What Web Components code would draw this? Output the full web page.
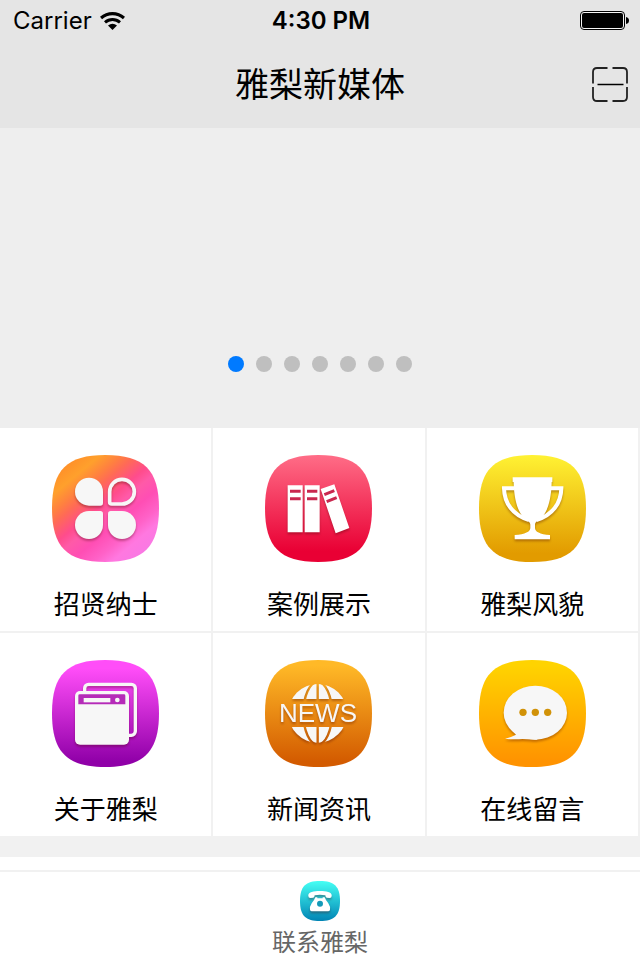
<!DOCTYPE html>
<html lang="zh-CN">
<head>
<meta charset="utf-8">
<meta name="viewport" content="width=device-width, initial-scale=1">
<title>雅梨新媒体</title>
<style>
  body {
    margin: 0;
    background: #fff;
    color: #000;
    font-family: Inter, "Noto Sans CJK SC", sans-serif;
  }
</style>
</head>
<body>
<media-app></media-app>

<script>
(() => {
  const SQUIRCLE = 'M160 0C276 0 321 45 321 160S276 321 160 321 0 276 0 160 45 0 160 0Z';

  class StatusBar extends HTMLElement {
    constructor() {
      super();
      this.attachShadow({ mode: 'open' });
      this.shadowRoot.innerHTML = `
        <style>
          :host{
            display:grid; grid-template-columns:1fr auto 1fr; align-items:center;
            height:42px; padding:0 11px 0 13px;
            font-size:24px; line-height:40px;
          }
          .carrier{ display:flex; align-items:center; gap:8px; }
          .time{ font-weight:600; }
          .battery{ justify-self:end; }
          svg{ display:block; }
        </style>
        <div class="carrier">
          <span>${this.getAttribute('carrier')}</span>
          <svg width="25" height="18" viewBox="0 0 25 18" fill="none" stroke="#000" aria-hidden="true">
            <path d="M1 6Q6 1.600 12.500 1.600T24 6" stroke-width="3.200"/>
            <path d="M5 10.300Q8.300 7.400 12.500 7.400T20 10.300" stroke-width="3"/>
            <path d="M8 13.600Q12.500 10 17 13.600L12.500 18Z" fill="#000" stroke="none"/>
          </svg>
        </div>
        <span class="time">${this.getAttribute('time')}</span>
        <svg class="battery" width="49" height="20" viewBox="0 0 49 20" aria-hidden="true">
          <rect x=".5" y=".5" width="44" height="18" rx="3.5" fill="#fff" fill-opacity=".6" stroke="#000"/>
          <rect x="2" y="2" width="41" height="15" rx="2" fill="#000"/>
          <path d="M46 6q3 .5 3 3.500t-3 3.500z"/>
        </svg>
      `;
    }
  }

  class NavBar extends HTMLElement {
    constructor() {
      super();
      this.attachShadow({ mode: 'open' });
      this.shadowRoot.innerHTML = `
        <style>
          :host{
            display:grid; grid-template-columns:1fr auto 1fr; align-items:center;
            height:86px; padding:0 12px;
          }
          h1{
            grid-column:2; margin:0;
            font-size:34px; font-weight:400; line-height:48px;
          }
          .action{ justify-self:end; display:flex; }
        </style>
        <h1><slot></slot></h1>
        <div class="action"><slot name="action"></slot></div>
      `;
    }
  }

  class BannerSlider extends HTMLElement {
    constructor() {
      super();
      this.attachShadow({ mode: 'open' });
      this.shadowRoot.innerHTML = `
        <style>
          :host{
            display:flex; align-items:flex-end; justify-content:center;
            box-sizing:border-box; height:300px; padding-bottom:56px;
            background:#eee;
          }
          .dots{ display:flex; gap:12px; }
          button{
            width:16px; height:16px; padding:0; border:0; border-radius:50%;
            background:#bfbfbf; cursor:pointer;
          }
          button[aria-current]{ background:#007aff; }
        </style>
        <div class="dots"></div>
      `;
      const dots = this.shadowRoot.querySelector('.dots');
      for (let i = 0; i < Number(this.getAttribute('count')); i++) {
        const b = document.createElement('button');
        b.type = 'button';
        b.setAttribute('aria-label', String(i + 1));
        b.addEventListener('click', () => this._show(i));
        dots.appendChild(b);
      }
      this._show(0);
    }

    _show(index) {
      this.shadowRoot.querySelectorAll('button').forEach((b, i) => {
        if (i === index) b.setAttribute('aria-current', 'true');
        else b.removeAttribute('aria-current');
      });
    }
  }

  // rounded tile with a gradient; the glyph is slotted on top
  class SquircleIcon extends HTMLElement {
    constructor() {
      super();
      this.attachShadow({ mode: 'open' });
      const stops = this.getAttribute('stops').split(',').map(s => {
        const [color, offset] = s.trim().split(' ');
        return `<stop offset="${offset}" stop-color="${color}"/>`;
      }).join('');
      const end = this.hasAttribute('diagonal') ? 'x1=".1" y1=".05" x2=".85" y2=".95"' : 'x1="0" y1="0" x2="0" y2="1"';
      this.shadowRoot.innerHTML = `
        <style>
          :host{ display:grid; width:var(--icon-size, 107px); height:var(--icon-size, 107px); }
          .tile, ::slotted(svg){ grid-area:1 / 1; display:block; width:100%; height:100%; }
          ::slotted(svg){ filter:drop-shadow(0 2px 1px rgba(70,0,0,.32)); }
        </style>
        <svg class="tile" viewBox="0 0 321 321" aria-hidden="true">
          <defs><linearGradient id="g" ${end}>${stops}</linearGradient></defs>
          <path d="${SQUIRCLE}" fill="url(#g)"/>
        </svg>
        <slot></slot>
      `;
    }
  }

  class MenuGrid extends HTMLElement {
    constructor() {
      super();
      this.attachShadow({ mode: 'open' });
      this.shadowRoot.innerHTML = `
        <style>
          :host{ display:grid; grid-template-columns:repeat(3, 1fr); }
        </style>
        <slot></slot>
      `;
    }
  }

  class MenuItem extends HTMLElement {
    constructor() {
      super();
      this.attachShadow({ mode: 'open' });
      this.shadowRoot.innerHTML = `
        <style>
          :host{ display:block; background:#fff; border:solid #f1f1f1; border-width:0 2px 2px 0; }
          a{
            display:flex; flex-direction:column; align-items:center; gap:25px;
            padding:27px 0 8px; color:inherit; text-decoration:none;
            font-size:26px; line-height:36px;
          }
        </style>
        <a href="#${this.getAttribute('to')}">
          <slot name="icon"></slot>
          <span>${this.getAttribute('label')}</span>
        </a>
      `;
    }
  }

  class TabBar extends HTMLElement {
    constructor() {
      super();
      this.attachShadow({ mode: 'open' });
      this.shadowRoot.innerHTML = `
        <style>
          :host{ display:block; border-top:2px solid #f1f1f1; background:#fff; }
          a{
            display:flex; flex-direction:column; align-items:center; gap:6px;
            padding:9px 0 1px; color:#666; text-decoration:none;
            font-size:24px; line-height:32px;
            --icon-size:40px;
          }
        </style>
        <a href="#contact">
          <slot name="icon"></slot>
          <span>${this.getAttribute('label')}</span>
        </a>
      `;
    }
  }

  class MediaApp extends HTMLElement {
    constructor() {
      super();
      this.attachShadow({ mode: 'open' });
      this.shadowRoot.innerHTML = `
        <style>
          :host{ display:flex; flex-direction:column; min-height:100vh; }
          header{ background:#e5e5e5; }
          main{ flex:1; }
          .gap{ height:19px; background:#f1f1f1; }
          .scan{ display:flex; padding:0; border:0; background:none; cursor:pointer; }
        </style>

        <header>
          <status-bar carrier="Carrier" time="4:30 PM"></status-bar>
          <nav-bar>雅梨新媒体
            <button class="scan" slot="action" type="button" aria-label="扫一扫">
              <svg width="36" height="36" viewBox="0 0 36 36" fill="none" stroke="#222" stroke-width="1.800">
                <path d="M1 16.500V5q0-4 4-4h10.500M20.500 1H31q4 0 4 4v11.500M35 20v10q0 4-4 4H20.500M15.500 34H5q-4 0-4-4V20"/>
                <path d="M5.500 17.500h26" stroke="#000" stroke-width="1.500"/>
              </svg>
            </button>
          </nav-bar>
        </header>

        <main>
          <banner-slider count="7"></banner-slider>

          <menu-grid>
            <menu-item to="jobs" label="招贤纳士">
              <squircle-icon slot="icon" diagonal stops="#ff8a28 0,#ffa02c .16,#ff8040 .27,#ff6b55 .34,#ff4c8c .47,#ff5aa8 .55,#ff4eb4 .66,#ff62c8 .78,#ff78e0 .87,#f878e4 1">
                <svg viewBox="0 0 321 321" fill="#f7f7f7" aria-hidden="true">
                  <path d="M111 68a42 42 0 0 0 0 84h34q8 0 8-8v-34a42 42 0 0 0-42-42z"/>
                  <path d="M111 252a42 42 0 0 1 0-84h34q8 0 8 8v34a42 42 0 0 1-42 42z"/>
                  <path d="M210 252a42 42 0 0 0 0-84h-34q-8 0-8 8v34a42 42 0 0 0 42 42z"/>
                  <path d="M210 73a37 37 0 0 1 0 74h-31q-6 0-6-6v-31a37 37 0 0 1 37-37z" fill="none" stroke="#f7f7f7" stroke-width="11"/>
                </svg>
              </squircle-icon>
            </menu-item>

            <menu-item to="cases" label="案例展示">
              <squircle-icon slot="icon" stops="#ff6d87 0,#e90034 .9">
                <svg viewBox="0 0 321 321" fill="#fff" aria-hidden="true">
                  <path d="M68 91h45v141H68zM119 91h45v141h-45zM167 102l41-14 45 131-41 16z"/>
                  <path d="M75 109h32M75 131h32M126 109h31M126 131h31M178 119l30-12M185 140l30-12" stroke="#c9284f" stroke-width="9"/>
                </svg>
              </squircle-icon>
            </menu-item>

            <menu-item to="style" label="雅梨风貌">
              <squircle-icon slot="icon" stops="#fff233 0,#e29b00 .92">
                <svg viewBox="0 0 321 321" fill="#fff" aria-hidden="true">
                  <path d="M101 67H220V81H218C217 128 208 163 192 183C181 196 168 199 168 209V219C168 230 182 238 213 240V253H107V240C139 238 154 230 154 219V209C154 199 141 196 130 183C114 163 105 128 104 81H101Z"/>
                  <path d="M106 100H75C76 145 102 181 150 195M215 100H247C246 145 220 181 172 195" fill="none" stroke="#fff" stroke-width="12"/>
                </svg>
              </squircle-icon>
            </menu-item>

            <menu-item to="about" label="关于雅梨">
              <squircle-icon slot="icon" stops="#ff4df8 0,#ff4df8 .08,#9000a8 .95">
                <svg viewBox="0 0 321 321" fill="#f7f7f7" aria-hidden="true">
                  <rect x="98" y="73" width="152" height="153" rx="12" fill="none" stroke="#f7f7f7" stroke-width="10"/>
                  <rect x="69" y="93" width="162" height="161" rx="15"/>
                  <path d="M79 133V107q0-4 4-4H216q4 0 4 4V133z" fill="#b52bb8"/>
                  <rect x="95" y="114" width="80" height="13"/>
                  <circle cx="196" cy="120" r="7"/>
                </svg>
              </squircle-icon>
            </menu-item>

            <menu-item to="news" label="新闻资讯">
              <squircle-icon slot="icon" stops="#ffb927 0,#ffb927 .05,#d35b00 .95">
                <svg viewBox="0 0 321 321" fill="#f7f7f7" aria-hidden="true">
                  <mask id="globe">
                    <path d="M60 60h200v57H60zM60 201h200v70H60z" fill="#fff"/>
                    <ellipse cx="158" cy="160" rx="43" ry="94" fill="none" stroke="#000" stroke-width="7"/>
                    <path d="M158 60v210" stroke="#000" stroke-width="7"/>
                  </mask>
                  <circle cx="158" cy="160" r="88" mask="url(#globe)"/>
                  <text x="159" y="186" text-anchor="middle" font-family="Liberation Sans, sans-serif" font-size="78">NEWS</text>
                </svg>
              </squircle-icon>
            </menu-item>

            <menu-item to="message" label="在线留言">
              <squircle-icon slot="icon" stops="#ffd300 0,#ffd300 .05,#ff9300 .95">
                <svg viewBox="0 0 321 321" fill="#f7f7f7" aria-hidden="true">
                  <ellipse cx="169" cy="158" rx="95" ry="81"/>
                  <path d="M95 208L111 224Q94 233 78 236Q106 239 130 237L175 239L160 200Z"/>
                  <g fill="#d19208">
                    <circle cx="132" cy="157" r="11"/>
                    <circle cx="169" cy="157" r="11"/>
                    <circle cx="206" cy="157" r="11"/>
                  </g>
                </svg>
              </squircle-icon>
            </menu-item>
          </menu-grid>

          <div class="gap"></div>
        </main>

        <tab-bar label="联系雅梨">
          <squircle-icon slot="icon" stops="#45fff4 0,#0084b4 1">
            <svg viewBox="0 0 120 120" fill="#fff" aria-hidden="true">
              <path d="M25 45C23 33 40 30 60 30S97 33 95 45Q95 51 89 51L80 50Q76 49 76 43Q60 40 44 43Q44 49 40 50L31 51Q25 51 25 45Z"/>
              <path d="M46 49h6v3h16v-3h6Q76 56 85 67Q92 78 90 86Q89 91 84 91H36Q31 91 30 86Q28 78 35 67Q44 56 46 49Z"/>
              <circle cx="60" cy="68" r="9" fill="#1499b8"/>
            </svg>
          </squircle-icon>
        </tab-bar>
      `;
    }
  }

  customElements.define('status-bar', StatusBar);
  customElements.define('nav-bar', NavBar);
  customElements.define('banner-slider', BannerSlider);
  customElements.define('squircle-icon', SquircleIcon);
  customElements.define('menu-grid', MenuGrid);
  customElements.define('menu-item', MenuItem);
  customElements.define('tab-bar', TabBar);
  customElements.define('media-app', MediaApp);
})();
</script>
</body>
</html>
